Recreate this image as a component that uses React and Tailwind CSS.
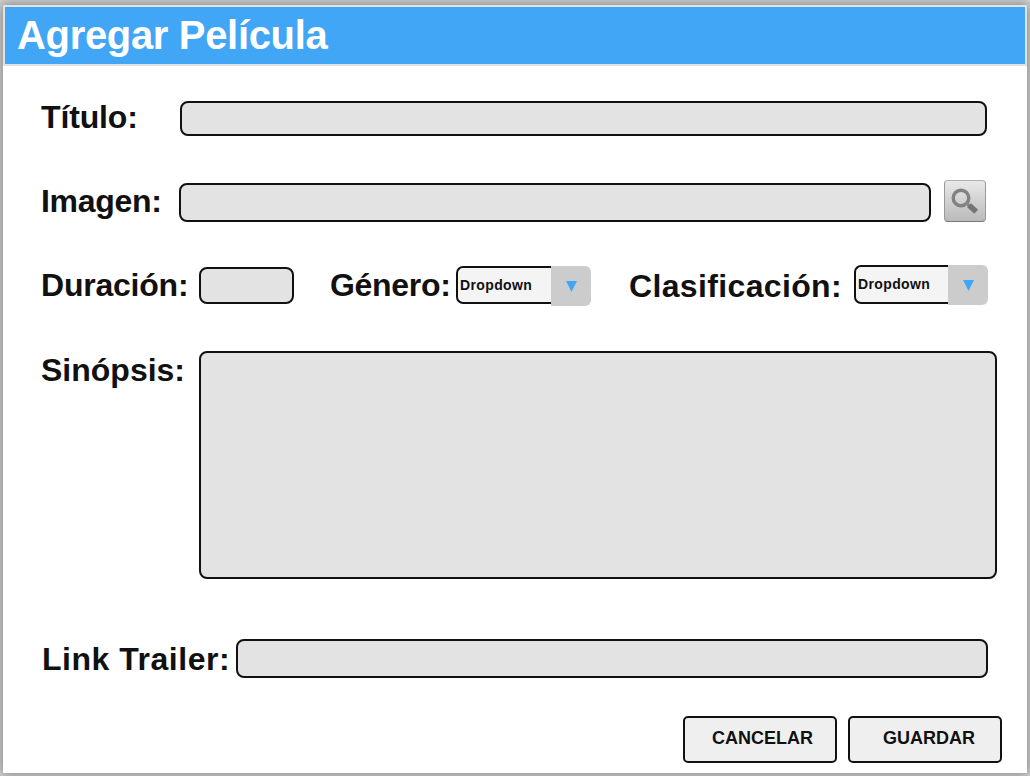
import React from "react";

function Label({ className = "", children }) {
  return (
    <label className={`block shrink-0 whitespace-nowrap text-[32px] leading-[36px] font-bold ${className}`}>
      {children}
    </label>
  );
}

const field = "block shrink-0 rounded-lg border-2 border-[#111] bg-[#e3e3e3] outline-none";

function Dropdown({ className = "", boxClass, arrowClass }) {
  return (
    <button type="button" className={`flex shrink-0 items-start text-left ${className}`}>
      <span className={`rounded-l-[7px] border-2 border-r-0 border-[#111] bg-[#f4f4f4] pl-[2px] text-sm font-bold tracking-[0.38px] ${boxClass}`}>
        Dropdown
      </span>
      <span className={`flex h-10 w-10 items-center rounded-r-md bg-[#ccc] ${arrowClass}`}>
        <svg width="12" height="12" viewBox="0 0 12 12" fill="#41a6f6">
          <path d="M0 1H11L5.5 12Z" />
        </svg>
      </span>
    </button>
  );
}

function SearchButton() {
  return (
    <button
      type="button"
      aria-label="Buscar"
      className="ml-[13px] -mt-[3px] flex h-[42px] w-[42px] shrink-0 rounded border border-[#999] border-t-[#b0b0b0] border-b-[#777] bg-linear-to-b from-[#e9e9e9] to-[#bababa]"
    >
      <svg width="40" height="40" viewBox="0 0 40 40" fill="none">
        <circle cx="16" cy="17" r="7.8" stroke="#828282" strokeWidth="3.4" />
        <path d="M21 22L25 25.5" stroke="#8a8a8a" strokeWidth="3" />
        <path d="M24 24.2L31.2 30.8" stroke="#747474" strokeWidth="5.6" />
      </svg>
    </button>
  );
}

const action = "h-[47px] w-[154px] rounded-[5px] border-2 border-[#111] bg-[#efefef] pb-1 text-lg leading-5 font-bold";

export default function App() {
  return (
    <div className="h-[776px] w-[1030px] overflow-hidden bg-[#dedede] px-[3px] pt-[5px] pb-[3px] font-['Liberation_Sans',Arial,sans-serif] text-[#111]">
      <main className="h-[768px] w-[1024px] bg-white shadow-[0_0_12px_3px_rgba(0,0,0,0.38)]">
        <header className="h-[61px] border-2 border-[#e2e2e2] bg-[#41a6f6] pl-3 text-white">
          <h1 className="pt-[5px] text-[40px] leading-[46px] font-bold tracking-[-0.33px]">Agregar Película</h1>
        </header>
        <form className="flex flex-col pl-[38px]">
          <div className="mt-[33px] flex h-[84px] items-start">
            <Label className="w-[139px] tracking-[-0.15px]">Título:</Label>
            <input className={`${field} mt-[2px] h-[35px] w-[807px]`} />
          </div>
          <div className="flex h-[84px] items-start">
            <Label className="w-[138px] tracking-[-0.3px]">Imagen:</Label>
            <input className={`${field} h-[39px] w-[752px]`} />
            <SearchButton />
          </div>
          <div className="flex h-[85px] items-start">
            <Label className="w-[158px] tracking-[-0.22px]">Duración:</Label>
            <input className={`${field} h-[37px] w-[95px]`} />
            <Label className="ml-[35px] w-[127px] pl-px tracking-[-0.3px]">Género:</Label>
            <Dropdown className="-mt-px" boxClass="h-[38px] w-[95px] leading-[34px]" arrowClass="pl-[15px]" />
            <Label className="mt-px ml-[37px] w-[226px] pl-px tracking-[0.35px]">Clasificación:</Label>
            <Dropdown className="-mt-[2px]" boxClass="h-[39px] w-[94px] leading-[35px]" arrowClass="pl-[15px]" />
          </div>
          <div className="flex h-[289px] items-start">
            <Label className="w-[158px]">Sinópsis:</Label>
            <textarea className={`${field} -mt-px h-[228px] w-[798px] resize-none`} />
          </div>
          <div className="flex h-[75px] items-start">
            <Label className="w-[195px] pl-px tracking-[0.52px]">Link Trailer:</Label>
            <input className={`${field} -mt-[2px] h-[39px] w-[752px]`} />
          </div>
          <div className="flex justify-end gap-[11px] pr-[25px]">
            <button type="button" className={`${action} pl-[5px]`}>CANCELAR</button>
            <button type="button" className={`${action} pl-2`}>GUARDAR</button>
          </div>
        </form>
      </main>
    </div>
  );
}
